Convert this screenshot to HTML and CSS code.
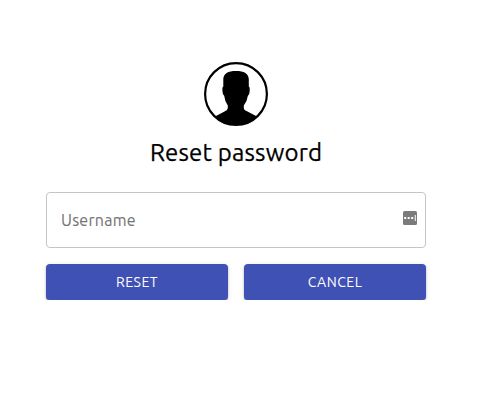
FILE: index.html
```html
<!DOCTYPE html>
<html lang="en">
<head>
<meta charset="utf-8">
<title>Reset password</title>
<link rel="stylesheet" href="styles.css">
</head>
<body>
<main class="panel">
  <svg class="avatar" viewBox="0 0 64 64" aria-hidden="true">
    <circle cx="32" cy="32" r="30.9" fill="#fff" stroke="#000" stroke-width="2.2"/>
    <path d="M11 54.5L20.5 49.5Q23.8 48 23.8 46V43.5Q20.8 39.5 20.2 33.8Q18.4 32.5 18.4 28.5V26Q18.4 25 19.3 24.5V17.5C19.3 11.5 24 9 32 9S44.8 11.5 44.8 17.5V24.5Q45.7 25 45.7 26V28.5Q45.7 32.5 43.9 33.8Q43.2 39 39.8 43.5V46Q39.8 48 43.5 49.5L53 54.5A31 31 0 0 1 11 54.5Z"/>
  </svg>
  <h1 class="title">Reset password</h1>
  <form class="form">
    <div class="field">
      <label class="label">Username</label>
      <svg class="field-icon" viewBox="0 0 14 14" aria-hidden="true">
        <rect width="14" height="14" rx="1.5" fill="#7b7b7b"/>
        <path d="M1.2 6h2v2h-2zM4.7 6h2v2h-2zM8.2 6h2v2h-2zM11.8 4h1v6h-1z" fill="#fff"/>
      </svg>
    </div>
    <div class="actions">
      <button class="button" type="button">RESET</button>
      <button class="button" type="button">CANCEL</button>
    </div>
  </form>
</main>
</body>
</html>
```
FILE: styles.css
```css
* { box-sizing: border-box; }
body {
  margin: 0;
  background: #fff;
  color: #000;
  font-family: Ubuntu, "Noto Sans", sans-serif;
}
.panel {
  width: 380px;
  margin: 62px 0 0 46px;
  display: flex;
  flex-direction: column;
  align-items: center;
}
.avatar { display: block; width: 64px; height: 64px; }
.title {
  margin: 11px 0 0;
  font-size: 24px;
  font-weight: 400;
  line-height: 32px;
  letter-spacing: 0.18px;
  white-space: nowrap;
  -webkit-text-stroke: 0.25px currentColor;
}
.form { width: 100%; margin-top: 23px; }
.field {
  height: 56px;
  padding: 0 8px 0 14px;
  border: 1px solid #c4c4c4;
  border-radius: 4px;
  display: flex;
  align-items: center;
  justify-content: space-between;
}
.label {
  color: #757575;
  font-size: 16px;
  line-height: 20px;
  letter-spacing: 0.25px;
  -webkit-text-stroke: 0.1px currentColor;
}
.field-icon { width: 14px; height: 14px; margin-top: -4px; }
.actions {
  margin-top: 16px;
  display: grid;
  grid-template-columns: 1fr 1fr;
  gap: 16px;
}
.button {
  height: 36px;
  padding: 0;
  border: 0;
  border-radius: 4px;
  background: #3f51b5;
  color: #fff;
  font: 400 14px/24px Ubuntu, "Noto Sans", sans-serif;
  letter-spacing: 0.5px;
  box-shadow: 0 1px 1px rgba(0, 0, 0, .25), 0 2px 2px rgba(0, 0, 0, .16), 0 1px 5px rgba(0, 0, 0, .12);
}
```
